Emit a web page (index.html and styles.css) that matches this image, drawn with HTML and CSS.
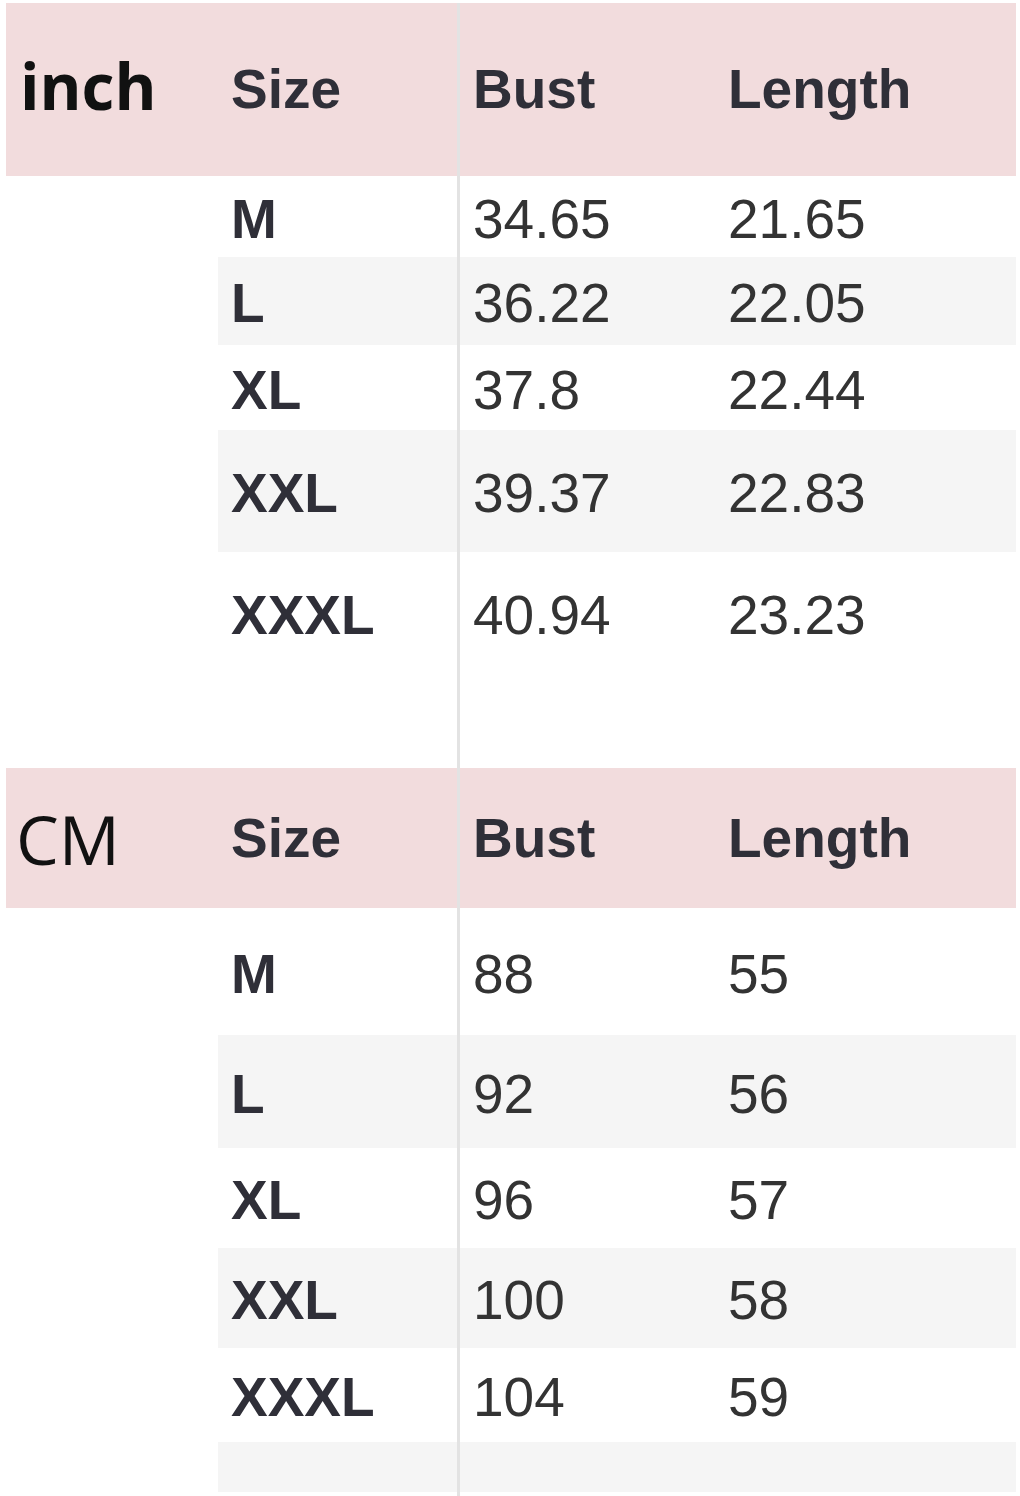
FILE: index.html
```html
<!DOCTYPE html>
<html lang="en">
<head>
<meta charset="utf-8">
<title>Size chart</title>
<link rel="stylesheet" href="styles.css">
</head>
<body>
<div class="chart">
  <section class="table">
    <div class="row head h-173">
      <div class="unit unit-inch">inch</div>
      <div class="cell th">Size</div>
      <div class="cell th bust">Bust</div>
      <div class="cell th">Length</div>
    </div>
    <div class="row h-81">
      <div class="unit"></div>
      <div class="cell sz">M</div>
      <div class="cell bust">34.65</div>
      <div class="cell">21.65</div>
    </div>
    <div class="row alt h-88">
      <div class="unit"></div>
      <div class="cell sz">L</div>
      <div class="cell bust">36.22</div>
      <div class="cell">22.05</div>
    </div>
    <div class="row h-85">
      <div class="unit"></div>
      <div class="cell sz">XL</div>
      <div class="cell bust">37.8</div>
      <div class="cell">22.44</div>
    </div>
    <div class="row alt h-122">
      <div class="unit"></div>
      <div class="cell sz">XXL</div>
      <div class="cell bust">39.37</div>
      <div class="cell">22.83</div>
    </div>
    <div class="row h-122">
      <div class="unit"></div>
      <div class="cell sz">XXXL</div>
      <div class="cell bust">40.94</div>
      <div class="cell">23.23</div>
    </div>
  </section>

  <div class="gap h-94"></div>

  <section class="table">
    <div class="row head h-140">
      <div class="unit unit-cm">CM</div>
      <div class="cell th">Size</div>
      <div class="cell th bust">Bust</div>
      <div class="cell th">Length</div>
    </div>
    <div class="row h-127">
      <div class="unit"></div>
      <div class="cell sz">M</div>
      <div class="cell bust">88</div>
      <div class="cell">55</div>
    </div>
    <div class="row alt h-113">
      <div class="unit"></div>
      <div class="cell sz">L</div>
      <div class="cell bust">92</div>
      <div class="cell">56</div>
    </div>
    <div class="row h-100">
      <div class="unit"></div>
      <div class="cell sz">XL</div>
      <div class="cell bust">96</div>
      <div class="cell">57</div>
    </div>
    <div class="row alt h-100">
      <div class="unit"></div>
      <div class="cell sz">XXL</div>
      <div class="cell bust">100</div>
      <div class="cell">58</div>
    </div>
    <div class="row h-94">
      <div class="unit"></div>
      <div class="cell sz">XXXL</div>
      <div class="cell bust">104</div>
      <div class="cell">59</div>
    </div>
    <div class="row alt h-50">
      <div class="unit"></div>
      <div class="cell"></div>
      <div class="cell bust"></div>
      <div class="cell"></div>
    </div>
  </section>

  <div class="gap h-4"></div>
</div>
</body>
</html>
```

FILE: styles.css
```css
html, body {
  margin: 0;
  padding: 0;
  background: #ffffff;
}

body {
  font-family: "Liberation Sans", Arial, sans-serif;
  width: 1020px;
  height: 1496px;
  overflow: hidden;
}

.chart {
  padding: 3px 4px 0 6px;
}

.row {
  display: grid;
  grid-template-columns: 212px 239px 258px 1fr;
}

.head {
  background: #f2dcdd;
}

.unit {
  display: flex;
  align-items: center;
  font-family: "Open Sans", "Noto Sans", sans-serif;
  color: #111111;
}

.unit-inch {
  font-size: 64px;
  font-weight: 700;
  padding-left: 14px;
  padding-bottom: 8px;
}

.unit-cm {
  font-size: 68px;
  font-weight: 400;
  padding-left: 10px;
}

.cell {
  display: flex;
  align-items: center;
  padding-left: 13px;
  padding-top: 5px;
  font-size: 55px;
  color: #333333;
  line-height: 1;
}

.cell.bust {
  border-left: 3px solid #e3e3e3;
  padding-left: 13px;
}

.th {
  padding-top: 0;
  font-weight: 700;
  color: #2f2f38;
}

.sz {
  font-weight: 700;
  color: #2f2f38;
}

.alt .cell {
  background: #f5f5f5;
}

.gap {
  margin-left: 451px;
  border-left: 3px solid #e3e3e3;
}

.h-4 { height: 4px; }
.h-50 { height: 50px; }
.h-81 { height: 81px; }
.h-85 { height: 85px; }
.h-88 { height: 88px; }
.h-94 { height: 94px; }
.h-100 { height: 100px; }
.h-113 { height: 113px; }
.h-122 { height: 122px; }
.h-127 { height: 127px; }
.h-140 { height: 140px; }
.h-173 { height: 173px; }
```
